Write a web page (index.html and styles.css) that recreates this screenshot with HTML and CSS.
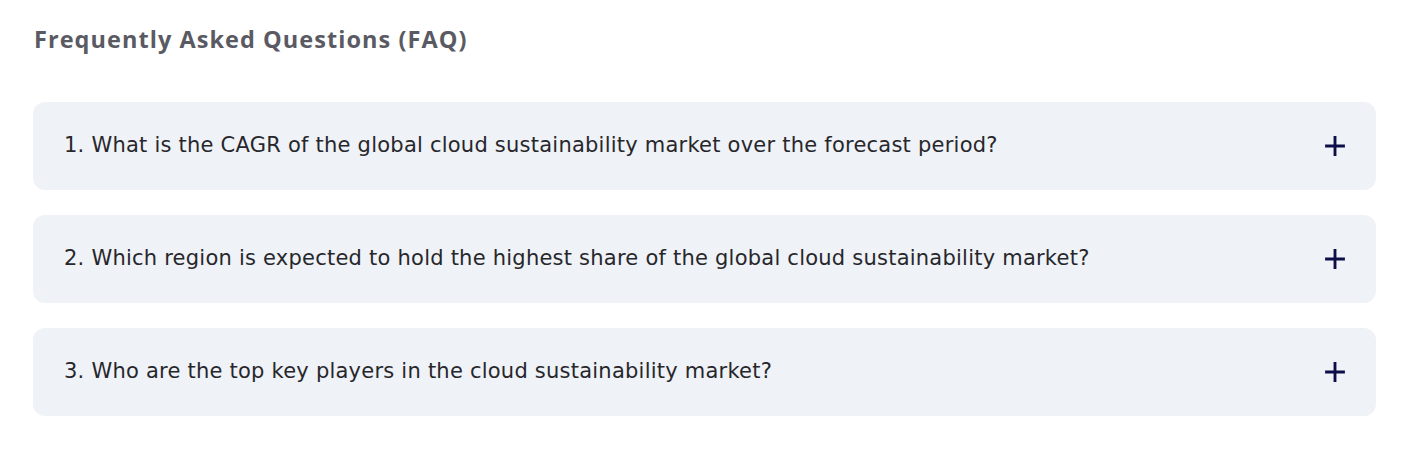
FILE: index.html
```html
<!DOCTYPE html>
<html>
<head>
<meta charset="utf-8">
<link rel="stylesheet" href="styles.css">
</head>
<body>
<section class="faq">
  <h2 class="faq-title">Frequently Asked Questions (FAQ)</h2>
  <div class="faq-list">
    <div class="faq-item">
      <span class="faq-q">1. What is the CAGR of the global cloud sustainability market over the forecast period?</span>
      <svg class="faq-icon" viewBox="0 0 20 20" width="22" height="22"><path d="M10 1v18M1 10h18" stroke="#0d0d47" stroke-width="2.6" fill="none"/></svg>
    </div>
    <div class="faq-item">
      <span class="faq-q">2. Which region is expected to hold the highest share of the global cloud sustainability market?</span>
      <svg class="faq-icon" viewBox="0 0 20 20" width="22" height="22"><path d="M10 1v18M1 10h18" stroke="#0d0d47" stroke-width="2.6" fill="none"/></svg>
    </div>
    <div class="faq-item">
      <span class="faq-q">3. Who are the top key players in the cloud sustainability market?</span>
      <svg class="faq-icon" viewBox="0 0 20 20" width="22" height="22"><path d="M10 1v18M1 10h18" stroke="#0d0d47" stroke-width="2.6" fill="none"/></svg>
    </div>
  </div>
</section>
</body>
</html>
```
FILE: styles.css
```css
html, body { margin: 0; padding: 0; background: #ffffff; }
.faq { padding: 23px 38px 0 33px; }
.faq-title {
  margin: 0 0 0 1px;
  font-family: "Open Sans", "DejaVu Sans", sans-serif;
  font-weight: 700;
  font-size: 23.5px;
  line-height: 32px;
  color: #5a5a63;
  letter-spacing: 1.05px;
}
.faq-list {
  margin-top: 47px;
  display: flex;
  flex-direction: column;
  gap: 25px;
}
.faq-item {
  height: 88px;
  box-sizing: border-box;
  background: #eff2f7;
  border-radius: 12px;
  display: flex;
  align-items: center;
  justify-content: space-between;
  padding: 0 30px 0 31px;
}
.faq-q {
  font-family: "DejaVu Sans", sans-serif;
  font-size: 21px;
  color: #27272b;
  letter-spacing: 0.23px;
  position: relative;
  top: -1px;
}
.faq-icon { display: block; }
```
